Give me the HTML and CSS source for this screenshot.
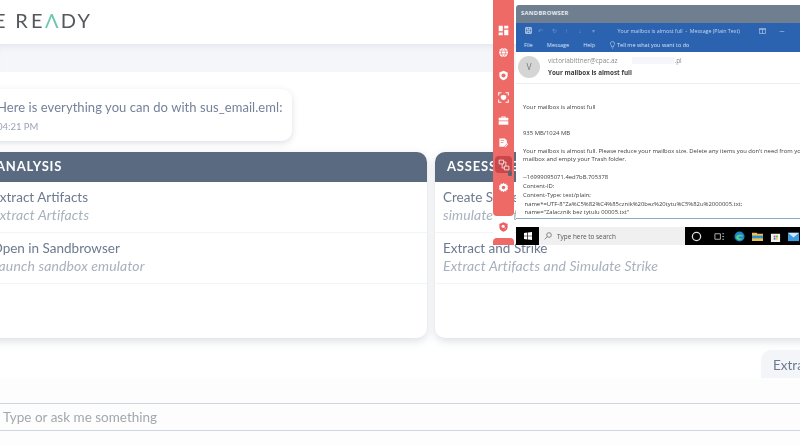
FILE: index.html
```html
<!DOCTYPE html>
<html lang="en">
<head>
<meta charset="utf-8">
<title>Ready</title>
<link rel="stylesheet" href="styles.css">
</head>
<body>
<div class="page">
  <header class="header">
    <div class="logo">E R<span class="tight">E</span><span class="teal">Λ</span>DY</div>
  </header>
  <div class="band"></div>
  <main class="chat">
    <div class="bubble">
      <div class="bubble-text">Here is everything you can do with sus_email.eml:</div>
      <div class="bubble-time">04:21 PM</div>
    </div>
    <div class="cards">
      <section class="card">
        <h2 class="card-head">ANALYSIS</h2>
        <div class="row"><div class="row-title">Extract Artifacts</div><div class="row-sub">Extract Artifacts</div></div>
        <div class="row"><div class="row-title">Open in Sandbrowser</div><div class="row-sub">Launch sandbox emulator</div></div>
      </section>
      <section class="card">
        <h2 class="card-head">ASSESSMENT</h2>
        <div class="row"><div class="row-title">Create Strike</div><div class="row-sub">simulate a strike</div></div>
        <div class="row"><div class="row-title">Extract and Strike</div><div class="row-sub">Extract Artifacts and Simulate Strike</div></div>
      </section>
    </div>
    <div class="reply">Extract Artifacts</div>
  </main>
  <div class="input-wrap">
    <div class="input">Type or ask me something</div>
  </div>
</div>

<aside class="rail">
  <div class="rail-main">
    <svg class="ri" viewBox="0 0 16 16"><path d="M1 1h6v8H1zM9 1h6v4H9zM9 7h6v8H9zM1 11h6v4H1z"/></svg>
    <svg class="ri" viewBox="0 0 16 16"><circle cx="8" cy="8" r="6.5"/><path class="cut" d="M1.5 6h13M1.5 10h13M8 1.5c-4 4-4 9 0 13M8 1.5c4 4 4 9 0 13"/></svg>
    <svg class="ri" viewBox="0 0 16 16"><path d="M8 1l6 2.500V8c0 3.500-2.500 6-6 7-3.500-1-6-3.500-6-7V3.500z"/><circle class="hole" cx="8" cy="8" r="3"/></svg>
    <svg class="ri" viewBox="0 0 16 16"><path class="frame" d="M1 5V1h4M11 1h4v4M15 11v4h-4M5 15H1v-4"/><path d="M8 4l4 1.500V8c0 2-2 3.500-4 4-2-.5-4-2-4-4V5.500z"/></svg>
    <svg class="ri" viewBox="0 0 16 16"><path d="M5 4V2h6v2h4v4H1V4zM6.500 4h3V3.200h-3zM1 9h14v5H1z"/></svg>
    <svg class="ri" viewBox="0 0 16 16"><path d="M2 2h8l3 3v4l-4 5H2z"/><path class="cut" d="M4 5h5M4 8h4"/><path d="M10 14l4-5 1 1-4 5h-1z"/></svg>
    <div class="ri-active">
      <svg class="ri-line" viewBox="0 0 16 16"><path d="M1.500 1.500h6v5h-6zM8.500 9.500h6v5h-6zM7.500 4h3v5.500M8.500 12h-3V6.500"/></svg>
      <span class="ri-badge"></span>
    </div>
    <svg class="ri" viewBox="0 0 16 16"><path d="M8 1l1.500 1.800 2.300-.5.7 2.300 2.200.9-.9 2.500.9 2.500-2.200.9-.7 2.300-2.300-.5L8 15l-1.500-1.800-2.300.5-.7-2.300-2.200-.9.9-2.500-.9-2.500 2.200-.9.7-2.300 2.300.5z"/><circle class="hole" cx="8" cy="8" r="2.500"/></svg>
  </div>
  <div class="rail-shield">
    <svg class="ri-red" viewBox="0 0 16 16"><path d="M8 1l6 2.500V8c0 3.500-2.500 6-6 7-3.500-1-6-3.500-6-7V3.500z"/><circle class="hole" cx="7.500" cy="7" r="2.200"/><path class="hole-line" d="M9 8.700l2 2"/></svg>
  </div>
  <div class="rail-foot"></div>
</aside>

<div class="window">
  <div class="win-title">SANDBROWSER</div>
  <div class="ribbon">
    <div class="ribbon-top">
      <svg class="save" viewBox="0 0 10 10"><path d="M1 1h8v8H1zM3 1v3h4V1M3 9V6h4v3"/></svg>
      <span class="faint">↶</span><span class="faint">↻</span><span class="faint">↑</span><span class="faint">↓</span><span class="faint">▾</span>
      <span class="ribbon-caption">Your mailbox is almost full &nbsp;-&nbsp; Message (Plain Text)</span>
      <svg class="win-btn" viewBox="0 0 10 8"><path d="M.5.5h9v7h-9zM5 2v5M.5 2h9"/></svg>
      <span class="win-min">—</span>
    </div>
    <div class="ribbon-tabs">
      <span>File</span><span>Message</span><span>Help</span>
      <span class="tell"><svg class="bulb" viewBox="0 0 8 12"><path d="M4 .5a3.300 3.300 0 0 1 2 6L5.500 9h-3L2 6.500A3.300 3.300 0 0 1 4 .5zM3 11h2"/></svg>Tell me what you want to do</span>
    </div>
  </div>
  <div class="msg-head">
    <div class="avatar">V</div>
    <div class="msg-meta">
      <div class="sender"><span>victoriabittner@cpac.az</span><span class="redact"></span><span>.pl</span></div>
      <div class="subject">Your mailbox is almost full</div>
    </div>
  </div>
  <div class="msg-body">
    <p class="p-first">Your mailbox is almost full</p>
    <p class="p-size">935 MB/1024 MB</p>
    <p class="p-warn">Your mailbox is almost full. Please reduce your mailbox size. Delete any items you don't need from your<br>mailbox and empty your Trash folder.</p>
    <p class="p-raw">--16999095071.4ed7bB.705378<br>Content-ID:<br>Content-Type: text/plain;<br>&nbsp;name*=UTF-8''Za%C5%82%C4%85cznik%20bez%20tytu%C5%82u%2000005.txt;<br>&nbsp;name="Zalacznik bez tytulu 00005.txt"</p>
  </div>
  <div class="taskbar">
    <div class="start"><svg class="winlogo" viewBox="0 0 12 12"><path d="M0 1.500l5-.7v4.700H0zM6 .7L12 0v5.500H6zM0 6.500h5v4.700l-5-.7zM6 6.500h6V12l-6-.7z"/></svg></div>
    <div class="search"><svg class="lens" viewBox="0 0 12 12"><circle cx="7.500" cy="4.500" r="3.500"/><path d="M5 7l-4 4"/></svg><span>Type here to search</span></div>
    <div class="tray">
      <svg class="tray-i tray-a" viewBox="0 0 12 12"><circle cx="6" cy="6" r="4.500" fill="none" stroke="#ddd" stroke-width="1.400"/></svg>
      <svg class="tray-i tray-b" viewBox="0 0 12 12"><path d="M1 3h6v6H1zM9 3h2M9 6h2M9 9h2" fill="none" stroke="#bbb"/></svg>
      <svg class="tray-i" viewBox="0 0 12 12"><circle cx="6" cy="6" r="5.500" fill="#1b86c9"/><path d="M2 7c1-4 7-4 8-1H5c0 2 3 3 5 2-2 3-7 2-8-1z" fill="#4fd08c"/></svg>
      <svg class="tray-i" viewBox="0 0 12 12"><path d="M0 2h5l1 1h6v8H0z" fill="#f3c14b"/><path d="M0 5h12v3H0z" fill="#2f8fd6"/></svg>
      <svg class="tray-i" viewBox="0 0 12 12"><path d="M1 3h10v9H1z" fill="#f1f1f1"/><path d="M4 5h2v2H4z" fill="#e5533d"/><path d="M6.500 5h2v2h-2z" fill="#6fb33a"/><path d="M4 7.500h2v2H4z" fill="#2f8fd6"/><path d="M6.500 7.500h2v2h-2z" fill="#f3c14b"/></svg>
      <svg class="tray-i" viewBox="0 0 12 12"><path d="M0 2h12v9H0z" fill="#3d9be0"/><path d="M0 2l6 5 6-5z" fill="#cfe8fb"/></svg>
    </div>
  </div>
</div>
</body>
</html>
```
FILE: styles.css
```css
* { box-sizing: border-box; }
html, body { margin: 0; padding: 0; }
body {
  width: 800px;
  height: 445px;
  overflow: hidden;
  background: #fff;
  font-family: "Lato", "Open Sans", sans-serif;
  position: relative;
}
.page { width: 800px; height: 445px; display: flex; flex-direction: column; overflow: hidden; filter: blur(.3px); }

.header { height: 44px; flex: none; background: #fff; overflow: hidden; }
.logo {
  margin-left: -6px;
  padding-top: 8px;
  font-size: 20px;
  line-height: 24px;
  font-weight: 400;
  letter-spacing: 2.3px;
  color: #55585c;
  white-space: nowrap;
}
.tight { margin-left: 1px; }
.teal { color: #6cc9ad; }

.band {
  height: 28px;
  flex: none;
  background: #f4f6fa;
  box-shadow: inset 0 7px 7px -5px #e1e4ea;
}

.chat { height: 306px; flex: none; overflow: hidden; background: #fff; padding-top: 17px; }
.bubble {
  width: 308px;
  height: 52px;
  margin-left: -16px;
  padding: 9px 13px;
  background: #fff;
  border-radius: 10px;
  box-shadow: 0 2px 6px rgba(90, 106, 128, .22);
}
.bubble-text { font-size: 13px; line-height: 18px; color: #75829a; letter-spacing: .06px; white-space: nowrap; }
.bubble-time { font-size: 9.500px; line-height: 14px; margin-top: 4px; color: #9aa4b2; }

.cards { display: grid; grid-template-columns: 443px 443px; gap: 8px; margin: 11px 0 0 -16px; }
.card {
  height: 186px;
  background: #fff;
  border-radius: 10px;
  overflow: hidden;
  box-shadow: 0 3px 9px rgba(90, 106, 128, .22);
}
.card-head {
  margin: 0;
  height: 30px;
  padding: 0 12px;
  background: #5a6a80;
  color: #fff;
  font-size: 13px;
  line-height: 29px;
  font-weight: 700;
  letter-spacing: .8px;
}
.row { height: 51px; padding: 7px 12px 0 8px; border-bottom: 1px solid #f3f4f6; white-space: nowrap; }
.row-title { font-size: 13.500px; line-height: 17px; color: #6c7a90; }
.row-sub { font-size: 14px; line-height: 17px; font-style: italic; color: #a8b1be; letter-spacing: .14px; }

.reply {
  width: 120px;
  height: 40px;
  margin: 12px 0 0 761px;
  padding: 7px 12px;
  background: #f3f5f9;
  border-radius: 10px 0 0 0;
  font-size: 13.500px;
  line-height: 16px;
  color: #6c7a90;
  white-space: nowrap;
}

.input-wrap { flex: 1; padding-top: 25px; background: #fdfdfd; }
.input {
  height: 28px;
  padding-left: 3px;
  border-top: 1px solid #cfd6e0;
  border-bottom: 1px solid #cfd6e0;
  font-size: 13.500px;
  line-height: 26px;
  color: #a3a7ae;
}

/* sandbrowser overlay */
.rail { position: absolute; left: 493px; top: 0; width: 21px; height: 245px; display: flex; flex-direction: column; }
.rail-main {
  height: 216px;
  padding-top: 25px;
  background: #ee6a67;
  border-radius: 0 0 4px 4px;
  display: flex;
  flex-direction: column;
  align-items: center;
  gap: 11.400px;
}
.ri { width: 11px; height: 11px; flex: none; fill: #fff; }
.ri .cut { fill: none; stroke: #ee6a67; stroke-width: 1; }
.ri .frame { fill: none; stroke: #fff; stroke-width: 1.500; }
.ri .hole { fill: #ee6a67; }
.ri-active {
  position: relative;
  width: 17px;
  height: 17px;
  margin: -3px 0;
  flex: none;
  background: #c9474a;
  border-radius: 4px;
  display: flex;
  align-items: center;
  justify-content: center;
}
.ri-line { width: 12px; height: 12px; fill: none; stroke: #fff; stroke-width: 1; }
.ri-badge { position: absolute; right: 0; bottom: -3px; width: 4px; height: 5px; background: #5a6470; border-radius: 1px; }
.rail-shield { height: 22px; background: #fff; display: flex; align-items: center; justify-content: center; }
.ri-red { width: 11px; height: 12px; fill: #ee5f5f; }
.ri-red .hole { fill: #fff; }
.ri-red .hole-line { fill: none; stroke: #fff; stroke-width: 1; }
.rail-foot { height: 7px; background: #ee6a67; border-radius: 4px 4px 0 0; }

.window {
  position: absolute;
  left: 516px;
  top: 5px;
  width: 284px;
  height: 240px;
  display: flex;
  flex-direction: column;
  background: #fff;
  border-radius: 3px 0 0 0;
  overflow: hidden;
  font-family: "Open Sans", sans-serif;
  filter: blur(.3px);
}
.win-title {
  height: 18px;
  flex: none;
  padding-left: 5px;
  background: #6f7f90;
  color: #e8ecf0;
  font-size: 5.800px;
  font-weight: 700;
  line-height: 17px;
  letter-spacing: .3px;
}
.ribbon { height: 29px; flex: none; background: #2b63b0; color: #d4e1f2; font-size: 5.500px; }
.ribbon-top { height: 15px; display: flex; align-items: center; padding-left: 9px; position: relative; }
.save { width: 7px; height: 7px; fill: none; stroke: #fff; stroke-width: 1; margin-right: 6px; }
.faint { width: 13.500px; font-size: 6px; color: #6f97cf; }
.ribbon-caption { margin-left: 12px; width: 136px; color: #c4d6ee; font-size: 5.300px; white-space: nowrap; }
.win-btn { width: 7px; height: 6px; fill: none; stroke: #d4e1f2; stroke-width: .8; margin-left: 5px; }
.win-min { margin-left: 14px; font-size: 5px; }
.ribbon-tabs { height: 14px; display: flex; align-items: center; padding-left: 8px; gap: 14px; white-space: nowrap; }
.tell { display: flex; align-items: center; gap: 2px; margin-left: 1px; }
.bulb { width: 5px; height: 8px; fill: none; stroke: #d4e1f2; stroke-width: .9; }

.msg-head { height: 32px; flex: none; display: flex; padding: 3px 0 0 2px; border-bottom: 1px solid #eeeeee; }
.avatar {
  width: 22px;
  height: 22px;
  flex: none;
  margin-top: 1px;
  border-radius: 50%;
  background: #d5d5d5;
  color: #777;
  font-size: 8.500px;
  line-height: 22px;
  text-align: center;
}
.msg-meta { margin-left: 8px; }
.sender { display: flex; align-items: center; font-size: 6.400px; line-height: 9px; color: #8b8b8b; margin-top: 1px; }
.redact { width: 42px; height: 7px; margin: 0 1px 0 14px; background: #f4f6fb; }
.subject { font-size: 6.300px; line-height: 9px; margin-top: 3px; font-weight: 700; color: #3a3a3a; }
.msg-body { height: 135px; flex: none; padding: 0 0 0 7px; font-size: 5.900px; line-height: 8.800px; color: #3c3c3c; white-space: nowrap; border-bottom: 1px solid #8fa9c7; overflow: hidden; }
.msg-body p { margin: 0; }
.p-first { padding-top: 19px; }
.p-size { padding-top: 17px; }
.p-warn { padding-top: 9px; }
.p-raw { padding-top: 9px; }

.taskbar { margin-top: 8px; height: 18px; flex: none; display: flex; background: #000; }
.start { width: 22px; flex: none; margin-left: 1px; display: flex; align-items: center; justify-content: center; }
.winlogo { width: 8px; height: 8px; fill: #fff; }
.search {
  width: 146px;
  flex: none;
  background: #f0f0f0;
  display: flex;
  align-items: center;
  padding-left: 5px;
  gap: 5px;
  font-size: 6.400px;
  color: #555;
}
.lens { width: 8px; height: 8px; fill: none; stroke: #555; stroke-width: 1; }
.tray { flex: 1; display: flex; align-items: center; padding-left: 6px; gap: 7px; }
.tray-i { width: 11px; height: 11px; flex: none; }
.tray-a { margin-right: 5px; }
.tray-b { margin-right: 2px; }
```
